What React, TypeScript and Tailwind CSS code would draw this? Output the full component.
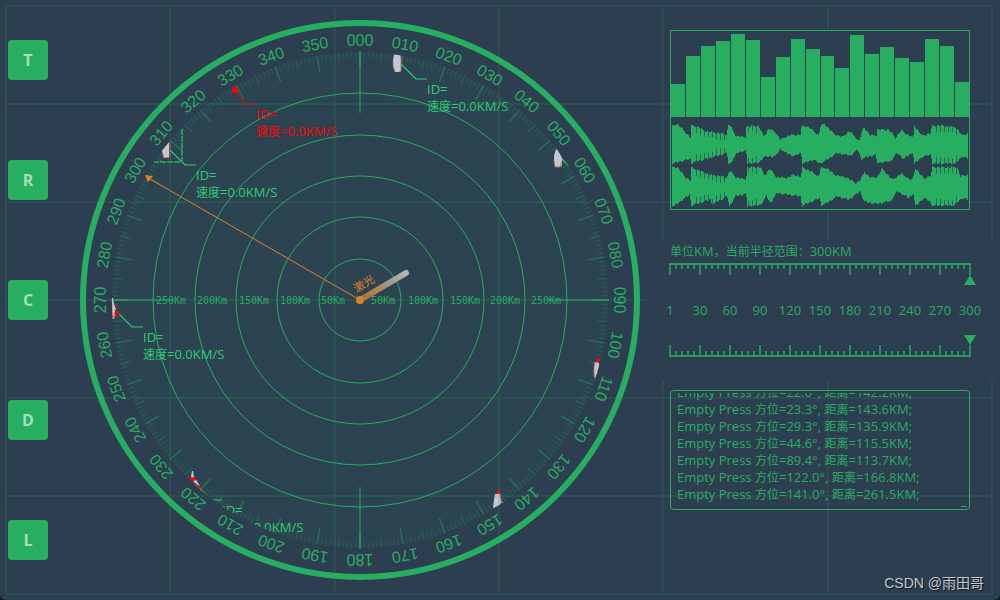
import { useState } from "react";

const CENTER = 280;
const SCOPE_RADIUS = 248;

const MODES = ["T", "R", "C", "D", "L"];

const RANGE_RINGS = [41, 83, 124, 165, 207];

const RANGE_LABELS = [
  { x: 91, text: "250Km" },
  { x: 132, text: "200Km" },
  { x: 174, text: "150Km" },
  { x: 215, text: "100Km" },
  { x: 253, text: "50Km" },
  { x: 303, text: "50Km" },
  { x: 343, text: "100Km" },
  { x: 385, text: "150Km" },
  { x: 425, text: "200Km" },
  { x: 466, text: "250Km" },
];

const BARS = [33, 61, 71, 76, 83, 77, 40, 60, 78, 68, 61, 49, 82, 63, 70, 59, 55, 78, 71, 35];

const SCALE = [1, 30, 60, 90, 120, 150, 180, 210, 240, 270, 300];

const LOGS = [
  { bearing: "22.0", distance: "142.2" },
  { bearing: "23.3", distance: "143.6" },
  { bearing: "29.3", distance: "135.9" },
  { bearing: "44.6", distance: "115.5" },
  { bearing: "89.4", distance: "113.7" },
  { bearing: "122.0", distance: "166.8" },
  { bearing: "141.0", distance: "261.5" },
];

type Target = {
  x: number;
  y: number;
  alert?: boolean;
  label?: boolean;
  hull?: string;
  edge?: string;
  marks?: string;
};

// Hull, edge and marks are drawn relative to the target position
const TARGETS: Target[] = [
  { x: 317, y: 43, label: true, hull: "M-3 -9L3 -9L4 -5V8L3 9H-2L-4 3V-2Z", edge: "M4 -8V8L2 9M-4 -1V3L-2 9" },
  { x: 155, y: 70, alert: true, label: true },
  { x: 86, y: 129, label: true, hull: "M3 -7V9L-2 9L-4 3V0Z", edge: "M4 -7V8L-2 9L-4 3" },
  { x: 478, y: 138, hull: "M-2 -9L0 -8L4 0V7L3 9H-3L-4 3V-2Z", edge: "M-4 3L-3 9H2L4 3" },
  { x: 33, y: 291, label: true, hull: "M0 -13L1 -7L3 -2L2 3L1 8H-2V-13Z", edge: "M2 1L0 7L-2 8", marks: "M2 -7L4 -5L2 -3ZM2 -2L7 3L2 6Z" },
  { x: 517, y: 348, hull: "M-2 -6L2 -5V1L0 7L-2 12L-3 5V-2Z", edge: "M-2 -6L-3 0V8", marks: "M0 -10H2L3 -6H-1Z" },
  { x: 417, y: 480, hull: "M-2 -6L3 -7L4 0V4L-1 7L-4 8L-3 0Z", edge: "M3 -6L4 0V4L-1 7", marks: "M0 -10H2L3 -6H-1Z" },
  { x: 112, y: 464, label: true, hull: "M0 -13H1L2 -6L4 -4L8 2L5 1L0 -4L-1 -7Z", marks: "M-3 -6L0 -7L5 -5L2 -3L-1 -3ZM3 -1L9 3L7 5Z" },
];

// Envelope key points: x, level
const CHANNELS: { top: number[][]; bottom: number[][]; mid: number }[] = [
  {
    mid: 84,
    top: [[2, 27], [17, 19], [37, 39], [57, 61], [58, 24], [77, 27], [97, 39], [127, 45], [167, 51], [169, 24], [175, 22], [192, 54], [224, 61], [225, 26], [262, 26], [277, 57], [292, 34], [312, 44], [327, 67], [352, 54], [387, 51], [391, 25], [412, 29], [442, 54], [447, 27], [459, 19], [487, 49], [512, 59], [534, 41], [562, 71], [577, 29], [597, 54], [615, 54], [617, 37], [652, 37], [672, 61], [689, 39], [725, 61], [729, 25], [752, 55], [777, 47], [782, 25], [817, 25], [852, 29], [872, 54], [890, 47]],
    bottom: [[2, 141], [57, 127], [59, 139], [97, 129], [167, 109], [170, 139], [175, 143], [197, 109], [224, 101], [227, 141], [262, 139], [277, 121], [312, 119], [327, 97], [347, 111], [367, 119], [389, 109], [393, 141], [427, 129], [445, 141], [467, 129], [497, 109], [537, 117], [559, 99], [569, 127], [579, 124], [612, 114], [617, 139], [657, 134], [677, 109], [697, 127], [724, 107], [729, 141], [752, 121], [779, 114], [782, 141], [852, 141], [872, 119], [890, 127]],
  },
  {
    mid: 208,
    top: [[2, 149], [17, 149], [42, 179], [57, 189], [59, 151], [82, 159], [117, 172], [167, 179], [175, 159], [192, 179], [224, 187], [227, 149], [267, 149], [279, 174], [295, 154], [315, 179], [347, 181], [367, 171], [389, 179], [392, 149], [417, 161], [442, 177], [447, 152], [467, 152], [487, 171], [527, 181], [552, 196], [564, 191], [579, 164], [597, 181], [617, 179], [632, 154], [662, 187], [689, 169], [722, 189], [732, 152], [757, 184], [779, 174], [782, 149], [857, 149], [867, 177], [890, 171]],
    bottom: [[2, 267], [7, 269], [27, 254], [55, 234], [59, 267], [117, 249], [122, 264], [167, 239], [174, 269], [192, 239], [224, 231], [227, 269], [267, 265], [285, 239], [297, 259], [317, 229], [347, 234], [387, 239], [392, 267], [445, 244], [449, 266], [467, 259], [497, 239], [532, 249], [567, 224], [577, 254], [597, 259], [617, 261], [657, 254], [677, 224], [712, 244], [725, 229], [732, 269], [757, 244], [775, 254], [782, 267], [847, 267], [872, 244], [890, 249]],
  },
];

// Stretches where the signal alternates hard between samples
const STRIPED = [[66, 168], [226, 264], [790, 860]];

function sample(points: number[][], x: number) {
  const next = points.findIndex((p) => p[0] >= x);
  if (next <= 0) return points[next === 0 ? 0 : points.length - 1][1];
  const [x0, y0] = points[next - 1];
  const [x1, y1] = points[next];
  return y0 + ((y1 - y0) * (x - x0)) / (x1 - x0);
}

function wavePath(channel: (typeof CHANNELS)[number], inner: boolean) {
  let d = "";
  for (let i = 1; i < 297; i++) {
    const x = i * 3;
    const pair = Math.floor(i / 2);
    const jitter = ((pair * 7) % 5) * 1.2 - 1;
    const striped = STRIPED.some(([from, to]) => x >= from && x <= to);
    const cut = inner && striped && i % 4 === 1 ? 18 : 0;
    const top = Math.min(sample(channel.top, x) + jitter + cut, channel.mid - 8);
    const bottom = Math.max(sample(channel.bottom, x) - jitter - cut, channel.mid + 8);
    d += `M${x} ${Math.round(top)}h3V${Math.round(bottom)}h-3Z`;
  }
  return d;
}

function Waveform() {
  return (
    <svg viewBox="0 0 894 276" className="block w-full fill-[#27ae60]" aria-hidden="true">
      {CHANNELS.map((channel) => (
        <g key={channel.mid}>
          <path d={wavePath(channel, false)} opacity="0.4" />
          <path d={wavePath(channel, true)} />
        </g>
      ))}
    </svg>
  );
}

function Ticks() {
  return (
    <g stroke="#27ae60">
      {Array.from({ length: 360 }, (_, deg) => {
        if (deg % 90 === 0) return null;
        const major = deg % 10 === 0;
        const half = deg % 5 === 0;
        const length = major ? 16 : half ? 10 : 6;
        return (
          <line
            key={deg}
            x1={CENTER}
            x2={CENTER}
            y1={CENTER - SCOPE_RADIUS}
            y2={CENTER - SCOPE_RADIUS + length}
            strokeWidth={major ? 1.6 : 1.2}
            opacity={major ? 0.4 : half ? 0.3 : 0.2}
            transform={`rotate(${deg} ${CENTER} ${CENTER})`}
          />
        );
      })}
      {[0, 90, 180, 270].map((deg) => (
        <g key={deg} transform={`rotate(${deg} ${CENTER} ${CENTER})`} strokeWidth="2">
          <line x1={CENTER} x2={CENTER} y1="31" y2="93" opacity="0.5" />
          <line x1={CENTER} x2={CENTER} y1="31" y2="48" opacity="0.4" />
        </g>
      ))}
    </g>
  );
}

function TargetMark({ target }: { target: Target }) {
  const color = target.alert ? "#ff0000" : "#2ecc71";
  const { x, y } = target;
  const labelX = x + (target.alert ? 21 : 30);
  const labelY = y + (target.alert ? 29 : 31);
  return (
    <g>
      <path
        d={target.alert ? `M${x} ${y}L${x + 10} ${y + 14}H${x + 21}` : `M${x + 4} ${y + 1}L${x + 19} ${y + 16}H${x + 30}`}
        fill="none"
        stroke={color}
        strokeWidth="1.2"
      />
      {target.alert && <circle cx={x} cy={y} r="3" fill={color} />}
      <g transform={`translate(${x} ${y})`}>
        {target.hull && <path d={target.hull} fill="#c3c7d2" />}
        {target.edge && <path d={target.edge} fill="none" stroke="#d0555c" strokeWidth="0.8" />}
        {target.marks && <path d={target.marks} fill="#ff0000" />}
      </g>
      {target.label && (
        <g className="text-[13px]" fill={color}>
          <text x={labelX} y={labelY}>ID=</text>
          <text x={labelX} y={labelY + 17}>
            <tspan className="text-[12px]">速度</tspan>=0.0KM/S
          </text>
        </g>
      )}
    </g>
  );
}

function Radar() {
  return (
    <svg viewBox="0 0 560 560" className="mt-5 ml-8 aspect-square w-[56%] flex-none" role="img" aria-label="Radar">
      <defs>
        <clipPath id="scope">
          <circle cx={CENTER} cy={CENTER} r={SCOPE_RADIUS} />
        </clipPath>
        <linearGradient id="beam" gradientUnits="userSpaceOnUse" x1="280" y1="280" x2="326" y2="253">
          <stop offset="0" stopColor="#e67e22" stopOpacity="0.7" />
          <stop offset="0.7" stopColor="#b3a698" stopOpacity="0.9" />
          <stop offset="1" stopColor="#b4b4b4" />
        </linearGradient>
      </defs>
      <circle cx={CENTER} cy={CENTER} r="277" fill="none" stroke="#27ae60" strokeWidth="6" />
      <circle cx={CENTER} cy={CENTER} r={SCOPE_RADIUS} fill="#27ae60" opacity="0.06" />
      <Ticks />
      {RANGE_RINGS.map((r) => (
        <circle key={r} cx={CENTER} cy={CENTER} r={r} fill="none" stroke="#27ae60" />
      ))}
      <g fill="#27ae60" textAnchor="middle" className="font-['Liberation_Sans',sans-serif] text-[16px]">
        {Array.from({ length: 36 }, (_, i) => (
          <text key={i} x={CENTER} y="26" transform={`rotate(${i * 10} ${CENTER} ${CENTER})`}>
            {String(i * 10).padStart(3, "0")}
          </text>
        ))}
      </g>
      <g fill="#27ae60" textAnchor="middle" className="font-['DejaVu_Sans_Mono',monospace] text-[10px]">
        {RANGE_LABELS.map((label) => (
          <text key={label.x} x={label.x} y="284">{label.text}</text>
        ))}
      </g>
      <g clipPath="url(#scope)">
        {TARGETS.map((target) => (
          <TargetMark key={target.x} target={target} />
        ))}
        <path d="M102 109V142H73" fill="none" stroke="#27ae60" strokeWidth="1.5" strokeDasharray="6 1" />
      </g>
      {/* Laser line and sweep handle */}
      <line x1="280" y1="280" x2="70" y2="159" stroke="#e67e22" />
      <path d="M65 155L73 156L68 162Z" fill="#e67e22" />
      <line x1="280" y1="280" x2="326" y2="253" stroke="url(#beam)" strokeWidth="6" strokeLinecap="round" />
      <circle cx="280" cy="280" r="4" fill="#e67e22" />
      <text x="286" y="267" textAnchor="middle" fill="#e67e22" className="text-[11px]" transform="rotate(-30 286 267)">
        激光
      </text>
    </svg>
  );
}

function Ruler({ flipped = false }: { flipped?: boolean }) {
  const marks = Array.from({ length: 51 }, (_, i) => i);
  return (
    <div className={`-mx-px flex h-3 justify-between border-[#27ae60]/85 ${flipped ? "items-end border-b-2" : "items-start border-t-2"}`}>
      {marks.map((i) => (
        <span key={i} className={`bg-[#27ae60]/70 ${i % 5 === 0 ? "h-full w-0.5" : "h-1 w-0.5"}`} />
      ))}
    </div>
  );
}

function RangeInput({ label, value, onChange, flipped = false }: {
  label: string;
  value: number;
  onChange: (value: number) => void;
  flipped?: boolean;
}) {
  return (
    <div className="-mx-[6px] flex">
      <input
        type="range"
        min={1}
        max={300}
        value={value}
        aria-label={label}
        onChange={(e) => onChange(Number(e.target.value))}
        className={`h-[10px] w-full appearance-none bg-transparent [&::-webkit-slider-thumb]:h-[10px] [&::-webkit-slider-thumb]:w-3 [&::-webkit-slider-thumb]:appearance-none [&::-webkit-slider-thumb]:bg-[#27ae60] ${
          flipped
            ? "[&::-webkit-slider-thumb]:[clip-path:polygon(0_0,100%_0,50%_100%)]"
            : "[&::-webkit-slider-thumb]:[clip-path:polygon(50%_0,100%_100%,0_100%)]"
        }`}
      />
    </div>
  );
}

export default function App() {
  const [mode, setMode] = useState("");
  const [radius, setRadius] = useState(300);

  return (
    <div className="bg-[#15191f]">
      <main className="relative flex min-h-screen items-start overflow-hidden rounded-b-md bg-[#2d3e50] font-['Open_Sans','Noto_Sans_CJK_SC',sans-serif] text-[13px] text-[#27ae60]">
        <div className="pointer-events-none absolute top-[5px] right-[7px] bottom-[5px] left-[5px] grid grid-cols-6 grid-rows-6 border-t-2 border-l-2 border-[#27ae60]/15">
          {Array.from({ length: 36 }, (_, i) => (
            <div key={i} className="border-r-2 border-b-2 border-[#27ae60]/15" />
          ))}
        </div>

        <nav className="relative flex flex-none flex-col gap-20 py-10 pl-2">
          {MODES.map((name) => (
            <button
              key={name}
              type="button"
              aria-pressed={mode === name}
              onClick={() => setMode(name)}
              className="size-10 rounded-sm bg-[#27ae60] text-base font-bold text-white/60"
            >
              {name}
            </button>
          ))}
        </nav>

        <Radar />

        <div className="relative ml-1.5 flex min-w-0 flex-1 flex-col pt-[30px]">
          <section className="mr-[30px] ml-6 border border-[#27ae60] bg-[#2d3e50]">
            <div className="flex h-[86px] items-end gap-px">
              {BARS.map((height, i) => (
                <div key={i} className="flex-1 bg-[#27ae60]" style={{ height }} />
              ))}
            </div>
            <Waveform />
          </section>

          <section className="mt-[30px] bg-[#2d3e50] pt-[3px] pr-[30px] pb-[23px] pl-6">
            <p className="mb-[3px] leading-[17px]">
              <span className="text-xs leading-none">单位</span>KM<span className="text-xs leading-none">，当前半径范围：</span>{radius}KM
            </p>
            <Ruler />
            <RangeInput label="Outer radius" value={radius} onChange={setRadius} />
            <div className="-mx-[15px] my-4 flex leading-[18px]">
              {SCALE.map((n) => (
                <span key={n} className="flex-1 text-center">{n}</span>
              ))}
            </div>
            <RangeInput label="Inner radius" value={radius} onChange={setRadius} flipped />
            <Ruler flipped />
          </section>

          <section className="relative mt-[10px] mr-[30px] ml-6 h-[120px] rounded-sm border border-[#27ae60] px-1.5 pt-0.5 pb-1.5">
            <div className="flex h-full flex-col justify-end overflow-hidden">
              {LOGS.map((log) => (
                <p key={log.bearing} className="flex-none leading-[17px] whitespace-nowrap">
                  Empty Press <span className="text-xs leading-none">方位</span>={log.bearing}°,{" "}
                  <span className="text-xs leading-none">距离</span>={log.distance}KM;
                </p>
              ))}
            </div>
            <span className="absolute right-0.5 bottom-0.5 h-px w-1.5 bg-[#27ae60]" />
          </section>
        </div>

        <p className="absolute right-4 bottom-[7px] font-['Liberation_Sans','Noto_Sans_CJK_SC',sans-serif] text-sm text-[#c5cad0] [text-shadow:1px_1px_1px_#000000aa]">
          CSDN @雨田哥
        </p>
      </main>
    </div>
  );
}
